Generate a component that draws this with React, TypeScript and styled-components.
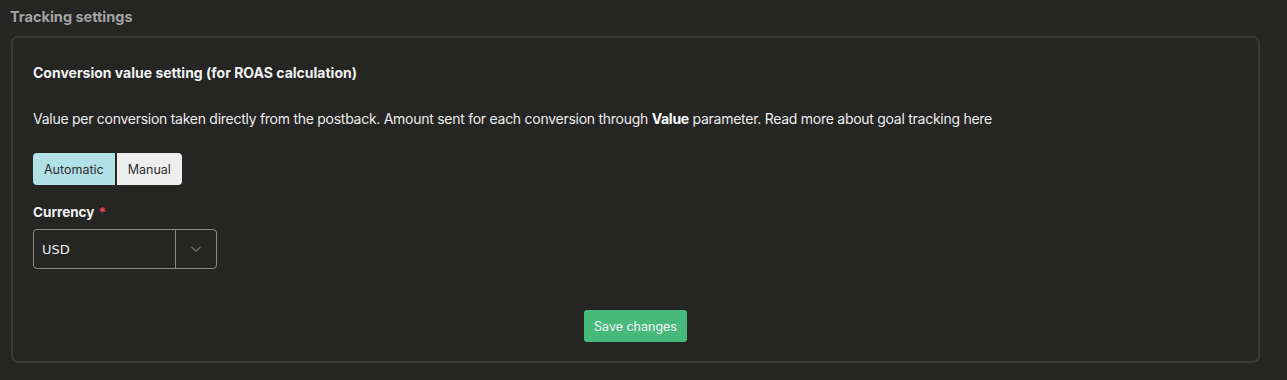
import styled, { createGlobalStyle } from "styled-components";

const GlobalStyle = createGlobalStyle`
  html, body {
    margin: 0;
    padding: 0;
    background: #252524;
  }
  body {
    font-family: Inter, "Noto Sans", sans-serif;
    color: #ececec;
  }
`;

const Page = styled.div`
  padding: 7px 27px 18px 11px;
  min-height: 380px;
  box-sizing: border-box;
`;

const SectionTitle = styled.h2`
  margin: 0 0 9px -1px;
  font-size: 14.5px;
  font-weight: 700;
  line-height: 20px;
  color: #a3a3a3;
`;

const Card = styled.div`
  border: 2px solid #393938;
  border-radius: 7px;
  padding: 25px 20px 19px 20px;
  display: flex;
  flex-direction: column;
`;

const Heading = styled.h3`
  margin: 0 0 26px 0;
  font-size: 14px;
  font-weight: 700;
  line-height: 20px;
  color: #f2f2f2;
`;

const Text = styled.p`
  margin: 0 0 24px 0;
  font-size: 14px;
  line-height: 20px;
  color: #ececec;
  letter-spacing: -0.27px;

  b {
    font-weight: 700;
    color: #fff;
  }
`;

const Toggle = styled.div`
  display: flex;
  gap: 2px;
  margin-bottom: 18px;
`;

const ToggleButton = styled.button<{ $active?: boolean }>`
  height: 32px;
  padding: 0 11px;
  border: none;
  font-family: inherit;
  font-size: 12.5px;
  color: #2e2e2e;
  background: ${(p) => (p.$active ? "#b1e0e6" : "#eeeeee")};
  border-radius: ${(p) => (p.$active ? "4px 0 0 4px" : "0 4px 4px 0")};
  cursor: pointer;
`;

const Label = styled.label`
  font-size: 13.5px;
  font-weight: 700;
  line-height: 18px;
  color: #f2f2f2;
  margin-bottom: 8px;

  span {
    color: #e5484d;
    margin-left: 4px;
  }
`;

const Select = styled.div`
  width: 184px;
  height: 40px;
  box-sizing: border-box;
  border: 1px solid #8c8b82;
  border-radius: 4px;
  display: flex;
  align-items: stretch;
`;

const SelectValue = styled.div`
  flex: 1;
  display: flex;
  align-items: center;
  padding-left: 8px;
  font-family: "DejaVu Sans", sans-serif;
  font-size: 13px;
  color: #ececec;
`;

const SelectArrow = styled.div`
  width: 40px;
  border-left: 1px solid #8c8b82;
  display: flex;
  align-items: center;
  justify-content: center;
`;

const Footer = styled.div`
  display: flex;
  justify-content: center;
  margin-top: 41px;
`;

const SaveButton = styled.button`
  height: 32px;
  padding: 0 10px;
  border: none;
  border-radius: 3px;
  background: #47b97b;
  color: #f6fff9;
  font-family: inherit;
  font-size: 12.5px;
  cursor: pointer;
`;

export default function App() {
  return (
    <>
      <GlobalStyle />
      <Page>
        <SectionTitle>Tracking settings</SectionTitle>
        <Card>
          <Heading>Conversion value setting (for ROAS calculation)</Heading>
          <Text>
            Value per conversion taken directly from the postback. Amount sent for each conversion
            through <b>Value</b> parameter. Read more about goal tracking here
          </Text>
          <Toggle>
            <ToggleButton $active>Automatic</ToggleButton>
            <ToggleButton>Manual</ToggleButton>
          </Toggle>
          <Label>
            Currency<span>*</span>
          </Label>
          <Select>
            <SelectValue>USD</SelectValue>
            <SelectArrow>
              <svg width="14" height="14" viewBox="0 0 14 14" fill="none">
                <path d="M3 5.5L7 9l4-3.5" stroke="#6f6f6a" strokeWidth="1.5" strokeLinecap="round" strokeLinejoin="round" />
              </svg>
            </SelectArrow>
          </Select>
          <Footer>
            <SaveButton>Save changes</SaveButton>
          </Footer>
        </Card>
      </Page>
    </>
  );
}
